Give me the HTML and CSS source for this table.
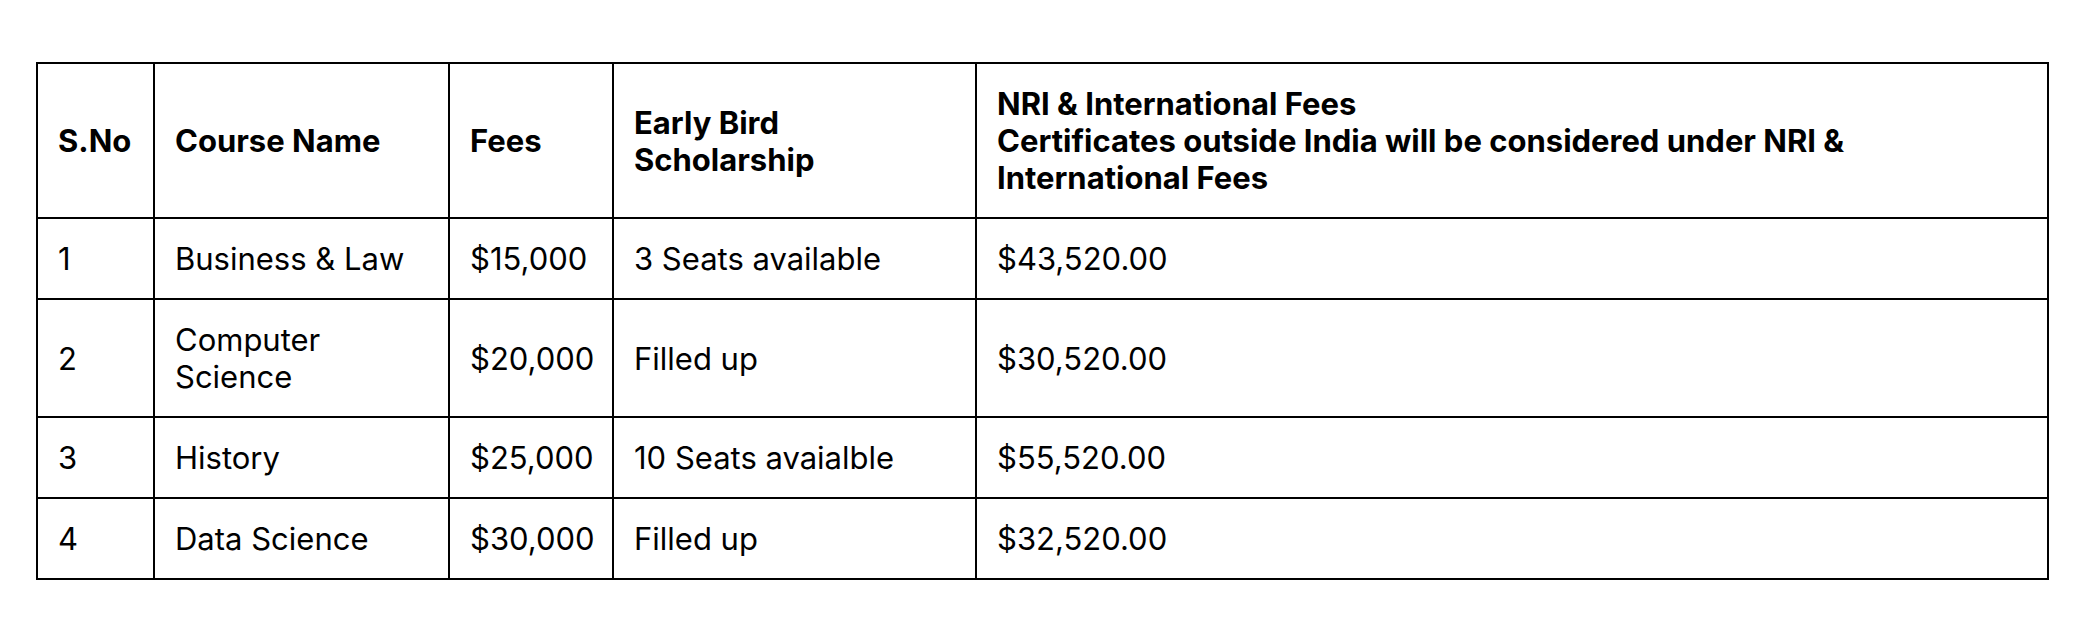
FILE: index.html
```html
<!DOCTYPE html>
<html lang="en">
<head>
<meta charset="utf-8">
<title>Fees</title>
<link rel="stylesheet" href="styles.css">
</head>
<body>
<div class="page">
  <table class="fees">
    <colgroup>
      <col class="c-sno">
      <col class="c-course">
      <col class="c-fees">
      <col class="c-early">
      <col class="c-nri">
    </colgroup>
    <thead>
      <tr>
        <th>S.No</th>
        <th>Course Name</th>
        <th>Fees</th>
        <th>Early Bird Scholarship</th>
        <th>NRI &amp; International Fees<br>Certificates outside India will be considered under NRI &amp; International Fees</th>
      </tr>
    </thead>
    <tbody>
      <tr><td>1</td><td>Business &amp; Law</td><td>$15,000</td><td>3 Seats available</td><td>$43,520.00</td></tr>
      <tr><td>2</td><td>Computer Science</td><td>$20,000</td><td>Filled up</td><td>$30,520.00</td></tr>
      <tr><td>3</td><td>History</td><td>$25,000</td><td>10 Seats avaialble</td><td>$55,520.00</td></tr>
      <tr><td>4</td><td>Data Science</td><td>$30,000</td><td>Filled up</td><td>$32,520.00</td></tr>
    </tbody>
  </table>
</div>
</body>
</html>
```
FILE: styles.css
```css
html, body {
  margin: 0;
  padding: 0;
  background: #fff;
}
.page {
  padding: 62px 43px 0 36px;
  font-family: Inter, "Liberation Sans", sans-serif;
  color: #000;
}
.fees {
  width: 100%;
  border-collapse: collapse;
  table-layout: fixed;
  font-size: 31px;
  line-height: 37px;
}
.c-sno { width: 117px; }
.c-course { width: 295px; }
.c-fees { width: 164px; }
.c-early { width: 363px; }
.fees th,
.fees td {
  border: 2px solid #000;
  padding: 21px 18px 21px 20px;
  text-align: left;
  vertical-align: middle;
}
.fees th {
  font-weight: 700;
}
.fees td {
  font-weight: 400;
}
```
